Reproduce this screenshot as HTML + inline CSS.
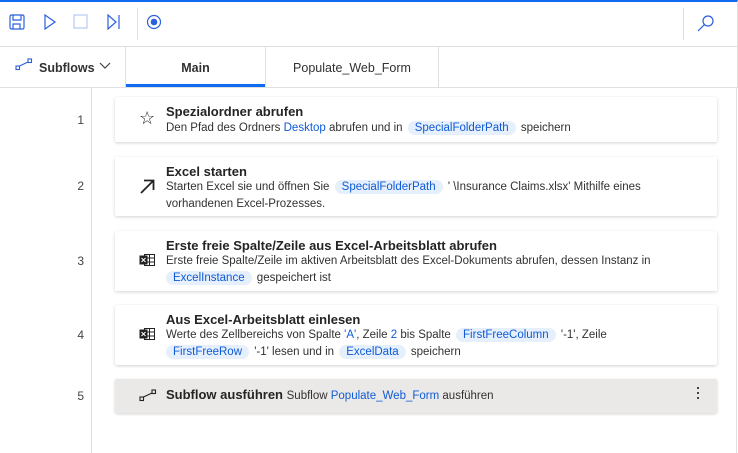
<!DOCTYPE html>
<html><head><style>
*{box-sizing:border-box;margin:0;padding:0}
body{width:738px;height:453px;overflow:hidden;background:#fff;font-family:"Liberation Sans",sans-serif;position:relative;color:#323130}
.abs{position:absolute}
.tb{left:0;top:0;width:738px;height:47px;border-top:2px solid #0f6cf0;border-bottom:1px solid #e1dfdd;border-right:1px solid #e1dfdd}
.tabs{left:0;top:47px;width:738px;height:41px;border-bottom:1px solid #e1dfdd;border-right:1px solid #e1dfdd}
.gut{left:91px;top:88px;width:1px;height:365px;background:#e1dfdd}
.num{left:60px;width:24px;text-align:right;font-size:12px;color:#444}
.card{left:115px;width:602px;background:#fff;box-shadow:0 1px 3px rgba(0,0,0,.18);border-radius:2px}
.t{position:absolute;left:51px;font-size:13px;font-weight:bold;color:#252423}
.d{position:absolute;left:51px;font-size:11.5px;line-height:17px;color:#323130;width:540px}
.b{color:#0f5bd6}
.p{background:#e6effc;color:#0f5bd6;border-radius:9px;padding:1px 7px;margin:0 2px}
.ic{position:absolute;left:24px}
</style></head><body>
<div class="abs tb">
<svg class="abs" style="left:9px;top:12px" width="16" height="16" viewBox="0 0 16 16" fill="none" stroke="#2b5fe0" stroke-width="1.2"><rect x="1" y="1" width="14" height="14" rx="1.5"/><path d="M4 1v5h8V1M4 15v-5h7v5"/></svg>
<svg class="abs" style="left:43px;top:12px" width="14" height="16" viewBox="0 0 14 16" fill="none" stroke="#2b5fe0" stroke-width="1.2"><path d="M2 1l10 7-10 7z"/></svg>
<svg class="abs" style="left:73px;top:12px" width="16" height="16"><rect x="1" y="1" width="13" height="13" fill="none" stroke="#b8c8f0" stroke-width="1.2"/></svg>
<svg class="abs" style="left:106px;top:12px" width="16" height="16" viewBox="0 0 16 16" fill="none" stroke="#2b5fe0" stroke-width="1.2"><path d="M2 1l8 7-8 7z M13 1v14"/></svg>
<div class="abs" style="left:137px;top:6px;width:1px;height:32px;background:#e1dfdd"></div>
<svg class="abs" style="left:146px;top:12px" width="16" height="16"><circle cx="8" cy="8" r="6.5" fill="none" stroke="#2b5fe0" stroke-width="1.2"/><circle cx="8" cy="8" r="3.3" fill="#2b5fe0"/></svg>
<div class="abs" style="left:683px;top:6px;width:1px;height:32px;background:#e1dfdd"></div>
<svg class="abs" style="left:697px;top:12px" width="18" height="18" fill="none" stroke="#2b5fe0" stroke-width="1.2"><circle cx="11" cy="7" r="5"/><path d="M7.5 10.5L1 17"/></svg>
</div>
<div class="abs tabs">
<svg class="abs" style="left:15px;top:11px" width="18" height="14" fill="none" stroke="#2b5fe0" stroke-width="1.1"><rect x="1" y="8" width="3.5" height="3.5"/><rect x="13" y="1" width="3.5" height="3.5"/><path d="M4.5 8L13 4"/></svg>
<div class="abs" style="left:39px;top:14px;font-size:12.5px;font-weight:bold">Subflows</div>
<svg class="abs" style="left:99px;top:15px" width="12" height="8" fill="none" stroke="#444" stroke-width="1.2"><path d="M1 1l5 5 5-5"/></svg>
<div class="abs" style="left:125px;top:0;width:1px;height:40px;background:#e1dfdd"></div>
<div class="abs" style="left:126px;top:14px;width:139px;text-align:center;font-size:12.5px;font-weight:bold">Main</div>
<div class="abs" style="left:126px;top:37px;width:139px;height:3px;background:#0f6cf0"></div>
<div class="abs" style="left:265px;top:0;width:1px;height:40px;background:#e1dfdd"></div>
<div class="abs" style="left:266px;top:14px;width:172px;text-align:center;font-size:12.5px">Populate_Web_Form</div>
<div class="abs" style="left:438px;top:0;width:1px;height:40px;background:#e1dfdd"></div>
</div>
<div class="abs gut"></div>
<div class="abs" style="left:736px;top:88px;width:1px;height:365px;background:#e1dfdd"></div>

<div class="abs num" style="top:113px">1</div>
<div class="abs num" style="top:179px">2</div>
<div class="abs num" style="top:254px">3</div>
<div class="abs num" style="top:328px">4</div>
<div class="abs num" style="top:389px">5</div>

<div class="abs card" style="top:97px;height:45px">
<div class="ic" style="top:11px;font-size:18px;color:#222">☆</div>
<div class="t" style="top:7px">Spezialordner abrufen</div>
<div class="d" style="top:23px">Den Pfad des Ordners <span class="b">Desktop</span> abrufen und in <span class="p">SpecialFolderPath</span> speichern</div>
</div>
<div class="abs card" style="top:157px;height:59px">
<svg class="ic" style="top:21px" width="16" height="16" fill="none" stroke="#222" stroke-width="1.8"><path d="M2 15L14 3M5 2.5h9.5V12"/></svg>
<div class="t" style="top:7px">Excel starten</div>
<div class="d" style="top:22px">Starten Excel sie und öffnen Sie <span class="p">SpecialFolderPath</span> ' \Insurance Claims.xlsx' Mithilfe eines vorhandenen Excel-Prozesses.</div>
</div>
<div class="abs card" style="top:231px;height:60px">
<svg class="ic" style="top:22px" width="17" height="14" fill="none" stroke="#222" stroke-width="1"><rect x="5.5" y="1.5" width="10" height="11"/><path d="M5.5 5h10M5.5 9h10M10.5 1.5v11"/><rect x="1" y="3" width="7" height="8" fill="#222"/><path d="M2.5 5l4 4M6.5 5l-4 4" stroke="#fff"/></svg>
<div class="t" style="top:7px">Erste freie Spalte/Zeile aus Excel-Arbeitsblatt abrufen</div>
<div class="d" style="top:22px">Erste freie Spalte/Zeile im aktiven Arbeitsblatt des Excel-Dokuments abrufen, dessen Instanz in <span class="p" style="margin-left:0">ExcelInstance</span> gespeichert ist</div>
</div>
<div class="abs card" style="top:305px;height:60px">
<svg class="ic" style="top:22px" width="17" height="14" fill="none" stroke="#222" stroke-width="1"><rect x="5.5" y="1.5" width="10" height="11"/><path d="M5.5 5h10M5.5 9h10M10.5 1.5v11"/><rect x="1" y="3" width="7" height="8" fill="#222"/><path d="M2.5 5l4 4M6.5 5l-4 4" stroke="#fff"/></svg>
<div class="t" style="top:7px">Aus Excel-Arbeitsblatt einlesen</div>
<div class="d" style="top:22px;width:480px">Werte des Zellbereichs von Spalte <span class="b">'A'</span>, Zeile <span class="b">2</span> bis Spalte <span class="p">FirstFreeColumn</span> '-1', Zeile <span class="p" style="margin-left:0">FirstFreeRow</span> '-1' lesen und in <span class="p">ExcelData</span> speichern</div>
</div>
<div class="abs card" style="top:379px;height:34px;background:#ebe9e7">
<svg class="ic" style="top:10px" width="18" height="14" fill="none" stroke="#222" stroke-width="1.1"><rect x="1" y="8" width="3.5" height="3.5"/><rect x="13" y="1" width="3.5" height="3.5"/><path d="M4.5 8L13 4"/></svg>
<div class="t" style="top:8px">Subflow ausführen <span style="font-weight:normal;font-size:11.5px;color:#323130">Subflow <span class="b">Populate_Web_Form</span> ausführen</span></div>
<div class="abs" style="left:582px;top:8px;width:3px;">
<div style="width:2px;height:2px;background:#444;margin-bottom:3px"></div><div style="width:2px;height:2px;background:#444;margin-bottom:3px"></div><div style="width:2px;height:2px;background:#444"></div></div>
</div>
</body></html>
